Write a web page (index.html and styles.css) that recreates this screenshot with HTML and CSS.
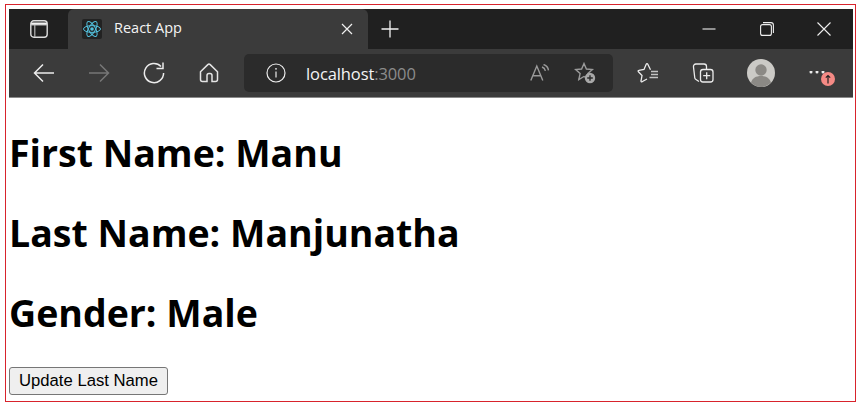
FILE: index.html
```html
<!DOCTYPE html>
<html lang="en">
<head>
<meta charset="utf-8">
<title>React App</title>
<link rel="stylesheet" href="styles.css">
</head>
<body>
<div class="frame">
  <div class="browser">
    <div class="tabstrip">
      <div class="tabside">
        <svg width="18" height="18" viewBox="0 0 18 18" fill="none" stroke="#dcdcdc" stroke-width="1.4"><path d="M1 2.500h16V5H1z" fill="#f2f2f2" stroke="none"/><rect x="0.800" y="0.800" width="16.400" height="16.400" rx="3"/><path d="M1 5h16M4.800 5v12" stroke-width="1.200" stroke="#b5b5b5"/></svg>
      </div>
      <div class="tab">
        <span class="favicon">
          <svg width="20" height="20" viewBox="0 0 20 20" fill="none" stroke="#53c1de" stroke-width="1"><circle cx="10" cy="10" r="1.800" fill="#53c1de" stroke="none"/><ellipse cx="10" cy="10" rx="8.500" ry="3.400"/><ellipse cx="10" cy="10" rx="8.500" ry="3.400" transform="rotate(60 10 10)"/><ellipse cx="10" cy="10" rx="8.500" ry="3.400" transform="rotate(120 10 10)"/></svg>
        </span>
        <span class="tabtitle">React App</span>
        <svg width="12" height="12" viewBox="0 0 12 12" stroke="#f0f0f0" stroke-width="1.200"><path d="M1 1l10 10M11 1L1 11"/></svg>
      </div>
      <div class="newtab">
        <svg width="18" height="18" viewBox="0 0 18 18" stroke="#f2f2f2" stroke-width="1.300"><path d="M9 0.500v17M0.500 9h17"/></svg>
      </div>
      <div class="winctl">
        <span class="winbtn"><svg width="14" height="14" viewBox="0 0 14 14" stroke="#eee" stroke-width="1.100"><path d="M0.500 7h13"/></svg></span>
        <span class="winbtn"><svg width="14" height="14" viewBox="0 0 14 14" fill="none" stroke="#eee" stroke-width="1.100"><rect x="0.600" y="2.600" width="10.800" height="10.800" rx="2"/><path d="M3 0.600h8a2.400 2.400 0 0 1 2.400 2.400v8"/></svg></span>
        <span class="winbtn"><svg width="14" height="14" viewBox="0 0 14 14" stroke="#eee" stroke-width="1.100"><path d="M0.500 0.500l13 13M13.500 0.500l-13 13"/></svg></span>
      </div>
    </div>
    <div class="toolbar">
      <div class="navgroup">
        <span class="slot"><svg width="22" height="20" viewBox="0 0 22 20" fill="none" stroke="#ececec" stroke-width="1.500"><path d="M21 10H1.500M10 1.500L1.500 10l8.500 8.500"/></svg></span>
        <span class="slot"><svg width="22" height="20" viewBox="0 0 22 20" fill="none" stroke="#777" stroke-width="1.500"><path d="M1 10h19.500M12 1.500l8.500 8.500-8.500 8.500"/></svg></span>
        <span class="slot"><svg width="22" height="22" viewBox="0 0 22 22" fill="none" stroke="#ececec" stroke-width="1.500"><path d="M18 4.500A9.600 9.600 0 1 0 20.600 11"/><path d="M20 0.500v6h-6.500"/></svg></span>
        <span class="slot"><svg width="20" height="20" viewBox="0 0 20 20" fill="none" stroke="#e4e4e4" stroke-width="1.500"><path d="M1.500 8.800L8.800 1.600a1.700 1.700 0 0 1 2.400 0l7.300 7.200V16.500a2 2 0 0 1-2 2h-3.500V12.500a2 2 0 0 0-2-2h-1a2 2 0 0 0-2 2v6H3.500a2 2 0 0 1-2-2z"/></svg></span>
      </div>
      <div class="omnibox">
        <svg width="20" height="20" viewBox="0 0 20 20" fill="none" stroke="#ececec" stroke-width="1.200"><circle cx="10" cy="10" r="9"/><path d="M10 8.500v6"/><circle cx="10" cy="5.800" r="0.900" fill="#ececec" stroke="none"/></svg>
        <span class="url"><span class="host">localhost</span><span class="port">:3000</span></span>
        <svg class="aloud" width="20" height="18" viewBox="0 0 20 18" fill="none" stroke="#9a9a9a" stroke-width="1.400"><path d="M0.800 16.500L6.800 2l6 14.500M2.800 11.800h8"/><path d="M12 3c1.800.6 3 2 3.400 3.800M13.500 0.500c2.600.8 4.600 3 5 5.800"/></svg>
        <svg width="22" height="22" viewBox="0 0 22 22" fill="none"><path d="M10 1.500l2.400 5.500 6 .6-4.500 4 1.300 5.900-5.200-3-5.200 3 1.300-5.900-4.500-4 6-.6z" stroke="#9a9a9a" stroke-width="1.400"/><circle cx="16" cy="16" r="5.200" fill="#a8a8a8"/><path d="M16 13.200v5.600M13.200 16h5.600" stroke="#2b2b2b" stroke-width="1.400"/></svg>
      </div>
      <div class="tools">
        <span class="tool tool-fav"><svg width="22" height="20" viewBox="0 0 22 20" fill="none" stroke="#ececec" stroke-width="1.300"><path d="M13.500 6.800L10.800 1.200a.9.9 0 0 0-1.600 0L7 6.500 1.800 7.400a.8.8 0 0 0-.4 1.400L5 12.500 4 18a.7.7 0 0 0 1 .8L10 16"/><path d="M14 8.500h7M14 11.500h7M12.500 14.500h8.500" stroke="#c4c4c4"/></svg></span>
        <span class="tool tool-coll"><svg width="22" height="22" viewBox="0 0 22 22" fill="none" stroke="#ececec" stroke-width="1.300"><path d="M7 19.500L4 17.500a2 2 0 0 1-1.200-1.500L1.500 5A2.500 2.500 0 0 1 4 2h8a2.500 2.500 0 0 1 2.500 2.500V7"/><rect x="8.500" y="7.500" width="12.500" height="12.500" rx="2.500"/><path d="M14.700 10.200v7M11.200 13.700h7"/></svg></span>
        <span class="tool tool-prof"><svg width="28" height="28" viewBox="0 0 28 28"><circle cx="14" cy="14" r="14" fill="#cbcac6"/><circle cx="14" cy="11" r="5.700" fill="#8b8985"/><path d="M4 23.500c1.500-4.500 5-6.500 10-6.500s8.500 2 10 6.500A14 14 0 0 1 14 28 14 14 0 0 1 4 23.500z" fill="#8b8985"/></svg></span>
        <span class="tool tool-more">
          <svg width="18" height="4" viewBox="0 0 18 4" fill="#ececec"><circle cx="3" cy="1" r="1.500"/><circle cx="9" cy="1" r="1.500"/><circle cx="15" cy="1" r="1.500"/></svg>
          <svg class="badge" width="14" height="14" viewBox="0 0 14 14"><circle cx="7" cy="7" r="7" fill="#f58a85"/><path d="M7 11.500V3.500M4.800 5.700L7 3.500l2.200 2.200" fill="none" stroke="#222" stroke-width="1.200"/></svg>
        </span>
      </div>
    </div>
    <div class="rule"></div>
  </div>
  <main class="page">
    <h1 class="line">First Name: Manu</h1>
    <h1 class="line">Last Name: Manjunatha</h1>
    <h1 class="line">Gender: Male</h1>
    <button class="update" type="button">Update Last Name</button>
  </main>
</div>
</body>
</html>
```
FILE: styles.css
```css
html, body {
  margin: 0;
  padding: 0;
  background: #fff;
}
body {
  padding: 4px 5px 0 5px;
  width: 861px;
  height: 408px;
  box-sizing: border-box;
  overflow: hidden;
}
.frame {
  box-sizing: border-box;
  width: 851px;
  height: 398px;
  border: 1px solid #d8232c;
  padding: 4px 2px 0 3px;
  overflow: hidden;
}
.browser {
  display: flex;
  flex-direction: column;
}
.tabstrip {
  display: flex;
  align-items: stretch;
  height: 40px;
  background: #202020;
}
.tabside {
  width: 59px;
  display: flex;
  align-items: center;
  justify-content: center;
  background: #202020;
}
.tab {
  width: 300px;
  display: flex;
  align-items: center;
  box-sizing: border-box;
  padding: 0 15px 0 14px;
  background: #3b3b3b;
  border-radius: 6px 6px 0 0;
}
.favicon {
  width: 20px;
  height: 20px;
  background: #222;
  border-radius: 2px;
  display: flex;
  margin-right: 12px;
}
.tabtitle {
  flex: 1;
  font: 14.500px/18px "Open Sans", sans-serif;
  color: #f4f4f4;
  padding-bottom: 2px;
}
.newtab {
  width: 43px;
  display: flex;
  align-items: center;
  justify-content: center;
}
.winctl {
  margin-left: auto;
  display: flex;
  align-items: center;
}
.winbtn {
  width: 57.500px;
  display: flex;
  justify-content: center;
}
.toolbar {
  height: 48px;
  background: #3b3b3b;
  display: flex;
  align-items: center;
  box-sizing: border-box;
  padding-left: 7px;
}
.navgroup {
  display: flex;
  align-items: center;
  width: 228px;
}
.slot {
  width: 55px;
  display: flex;
  justify-content: center;
}
.omnibox {
  box-sizing: border-box;
  width: 369px;
  height: 38px;
  background: #2b2b2b;
  border-radius: 5px;
  display: flex;
  align-items: center;
  padding: 0 17px 0 22px;
}
.url {
  flex: 1;
  margin-left: 20px;
  font: 16.500px "Open Sans", sans-serif;
  letter-spacing: -0.100px;
}
.host { color: #f4f4f4; }
.port { color: #8c8c8c; }
.aloud { margin-right: 24px; }
.tools {
  flex: 1;
  display: flex;
  align-items: center;
  padding-left: 9px;
}
.tool {
  display: flex;
  justify-content: center;
  align-items: center;
  position: relative;
}
.tool-fav { width: 52px; }
.tool-coll { width: 58px; }
.tool-prof { width: 58px; }
.tool-more { width: 54px; }
.badge {
  position: absolute;
  left: 31px;
  top: 1px;
}
.rule {
  height: 1px;
  background: #8a8a8a;
}
.page {
  display: flow-root;
}
.line {
  font: 700 37.500px/50px "Open Sans", sans-serif;
  color: #000;
  margin: 30px 0;
}
.line:last-of-type {
  margin-bottom: 29px;
}
.update {
  display: block;
  box-sizing: border-box;
  width: 159px;
  height: 28px;
  padding: 0;
  font: 16.670px "Liberation Sans", Arial, sans-serif;
  color: #000;
  background: #efefef;
  border: 1px solid #767676;
  border-radius: 3px;
}
```
